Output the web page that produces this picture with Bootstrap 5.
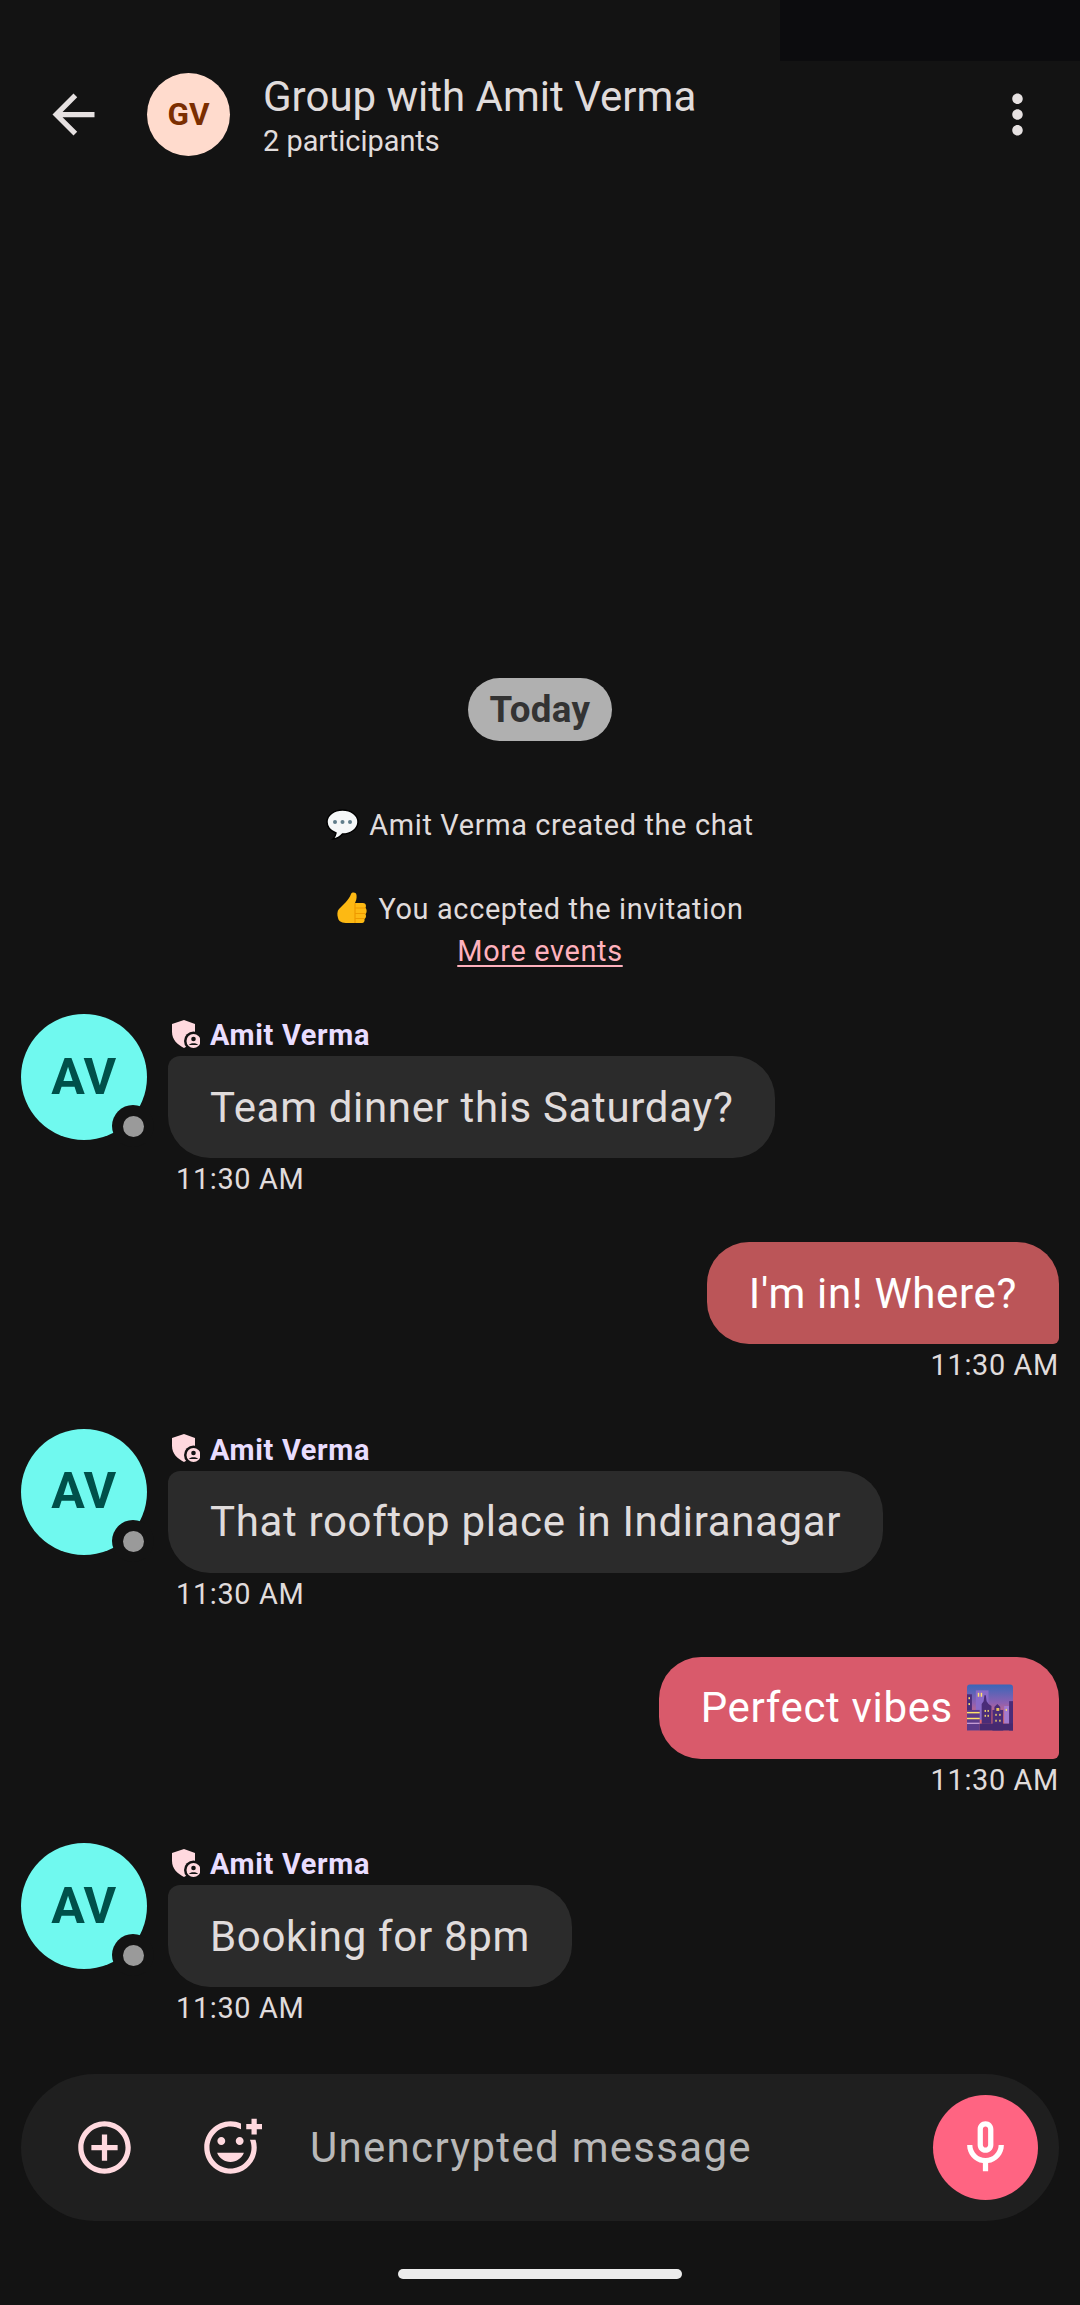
<!DOCTYPE html>
<html lang="en"><head><meta charset="utf-8"><title>Group with Amit Verma</title>
<link href="https://cdn.jsdelivr.net/npm/bootstrap@5.3.0/dist/css/bootstrap.min.css" rel="stylesheet">
<style>
html,body{margin:0;background:#131313}
body{font-family:Roboto,"Liberation Sans",sans-serif;color:#e6e1e1}
.screen{width:1080px;height:2305px;background:#131313;overflow:hidden}
.status-patch{position:absolute;top:0;right:0;width:300px;height:61px;background:#0c0c0e}
.top-head{height:83px;margin-top:73px;padding-left:42px;padding-right:31px}
.ico{width:63px;height:63px;flex:none;fill:currentColor}
.head-av{width:83px;height:83px;background:#ffdbcd;color:#7b2e00;font-size:31.5px;font-weight:700;margin-left:42px;margin-right:33px;flex:none}
.head-title{font-size:42px;line-height:50px;color:#e0dcdc;padding-top:3px}
.head-sub{font-size:28.9px;line-height:38px;color:#e0dcdc}
.feed{padding:0 21px}
.day-pill{width:144px;height:63px;background:#b0b0b0;color:#333;font-size:36.75px;font-weight:700;letter-spacing:.35px}
.event-line{font-size:28.9px;line-height:40px;letter-spacing:.65px;color:#e0dcdc}
.gap-a{margin-top:64px}
.gap-b{margin-top:44px}
.more-link{font-size:28.9px;line-height:40px;letter-spacing:.65px;color:#ffb1bd;text-decoration:underline;text-underline-offset:4px;margin-top:2px}
.emo{display:inline-block;vertical-align:-6px;margin-right:10px}
.av-wrap{width:126px;height:126px;flex:none;margin-right:21px}
.av-face{width:126px;height:126px;background:#70f9ef;color:#00504a;font-size:50px;font-weight:700;letter-spacing:.5px}
.av-dot{position:absolute;left:91px;top:91px;width:42px;height:42px;background:#131313;border-radius:50%}
.av-dot::after{content:"";position:absolute;left:11px;top:11px;width:21px;height:21px;border-radius:50%;background:#9a9a9a}
.who{height:42px;padding-top:2px;font-size:28.9px;font-weight:700;color:#e9ddff;letter-spacing:.66px;margin-left:4px}
.who svg{width:28px;height:28px;margin-right:10px;margin-top:-5px}
.bub{height:102px;font-size:42px;letter-spacing:.66px;padding:0 42px;border-radius:42px;white-space:nowrap}
.bub-in{background:#2b2b2b;color:#e0dcdc;border-top-left-radius:12px}
.bub-out{color:#fff;border-bottom-right-radius:6px}
.tone-a{background:#bb5558}
.tone-b{background:#d95a6b}
.city-emo{margin-left:3px;margin-right:4px}
.stamp{font-size:28.9px;line-height:32px;letter-spacing:.65px;color:#e0dcdc;margin-top:5px}
.stamp-l{padding-left:8px}
.row-first{margin-top:43px}
.row-next{margin-top:47.25px}
.composer{margin:50px 21px 0;height:147px;background:#1f1f1f;border-radius:74px;padding-left:52px;padding-right:21px}
.composer .ico{color:#ffd9df}
.composer .mic-btn .ico{color:#fff}
.ico-gap{margin-left:63px}
.ph{font-size:42px;letter-spacing:1.3px;color:#b8b8b8;margin-left:48px}
.mic-btn{width:105px;height:105px;background:#ff6482;flex:none}
.home-bar{width:284px;height:10px;background:#ececec;border-radius:5px;margin:48px auto 26px}
</style></head><body>
<div class="screen position-relative d-flex flex-column">
<div class="status-patch"></div>
<div class="top-head d-flex align-items-center">
<svg class="ico" viewBox="0 0 24 24"><path d="M20 11H7.83l5.59-5.59L12 4l-8 8 8 8 1.41-1.41L7.83 13H20v-2z"/></svg>
<div class="head-av rounded-circle d-flex align-items-center justify-content-center">GV</div>
<div class="flex-grow-1"><div class="head-title">Group with Amit Verma</div><div class="head-sub">2 participants</div></div>
<svg class="ico" viewBox="0 0 24 24"><path d="M12 8c1.1 0 2-.9 2-2s-.9-2-2-2-2 .9-2 2 .9 2 2 2zm0 2c-1.1 0-2 .9-2 2s.9 2 2 2 2-.9 2-2-.9-2-2-2zm0 6c-1.1 0-2 .9-2 2s.9 2 2 2 2-.9 2-2-.9-2-2-2z"/></svg>
</div>
<div class="feed flex-grow-1 d-flex flex-column justify-content-end">
<div class="text-center d-flex flex-column align-items-center">
<div class="day-pill rounded-pill d-flex align-items-center justify-content-center">Today</div>
<div class="event-line gap-a"><svg class="emo" width="33" height="32" viewBox="0 0 33 32"><path d="M16.5 1C8 1 1 6.3 1 13c0 5 3.8 9 9 11-.3 2.500-1.500 4.500-3 6 4-.4 7.500-2.500 9.500-5 8.500 0 15.500-5.300 15.500-12S25 1 16.500 1z" fill="#f5f7f8" stroke="#000" stroke-width="1.500"/><circle cx="9" cy="13" r="2" fill="#607d8b"/><circle cx="16.500" cy="13" r="2" fill="#607d8b"/><circle cx="24" cy="13" r="2" fill="#607d8b"/></svg>Amit Verma created the chat</div>
<div class="event-line gap-b"><svg class="emo" width="32" height="33" viewBox="0 0 32 33"><path d="M3 17C7 13 13 8 15 2C16 0 20 0 20.500 3C21 6 20 9 19 11L27 11C30 11 30.500 14 29.500 16C31 17 31 21 29.500 22C30.500 24 30 26 28.500 27C29 29 28 31 26 31L13 31C9 31 3 31 2 26C1 23 1 19 3 17z" fill="#fdb913"/><path d="M19 16h10M19 21.500h10M19 26.500h9M19 11v20" stroke="#ef9a00" stroke-width="1.200" fill="none"/></svg>You accepted the invitation</div>
<div class="more-link">More events</div>
</div>
<div class="d-flex row-first">
<div class="av-wrap position-relative"><div class="av-face rounded-circle d-flex align-items-center justify-content-center">AV</div><span class="av-dot"></span></div>
<div><div class="who d-flex align-items-center"><svg viewBox="0 0 28 28"><path d="M12 0L23 4V12C23 19 18 25 12 28C6 25 0 20 0 12V4z" fill="#ffd9df"/><circle cx="21.500" cy="21" r="9.500" fill="#131313"/><circle cx="21.500" cy="21" r="7" fill="#ffd9df"/><circle cx="21.500" cy="19" r="2.300" fill="#131313"/><path d="M17 25c1-2.500 8-2.500 9 0z" fill="#131313"/></svg>Amit Verma</div>
<div class="bub bub-in d-inline-flex align-items-center">Team dinner this Saturday?</div><div class="stamp stamp-l">11:30 AM</div></div>
</div>
<div class="d-flex flex-column align-items-end row-next">
<div class="bub bub-out tone-a d-flex align-items-center">I'm in! Where?</div><div class="stamp">11:30 AM</div></div>
<div class="d-flex row-next">
<div class="av-wrap position-relative"><div class="av-face rounded-circle d-flex align-items-center justify-content-center">AV</div><span class="av-dot"></span></div>
<div><div class="who d-flex align-items-center"><svg viewBox="0 0 28 28"><path d="M12 0L23 4V12C23 19 18 25 12 28C6 25 0 20 0 12V4z" fill="#ffd9df"/><circle cx="21.500" cy="21" r="9.500" fill="#131313"/><circle cx="21.500" cy="21" r="7" fill="#ffd9df"/><circle cx="21.500" cy="19" r="2.300" fill="#131313"/><path d="M17 25c1-2.500 8-2.500 9 0z" fill="#131313"/></svg>Amit Verma</div>
<div class="bub bub-in d-inline-flex align-items-center">That rooftop place in Indiranagar</div><div class="stamp stamp-l">11:30 AM</div></div>
</div>
<div class="d-flex flex-column align-items-end row-next">
<div class="bub bub-out tone-b d-flex align-items-center">Perfect vibes&nbsp;<svg class="city-emo" width="46" height="47" viewBox="0 0 47 47"><defs><linearGradient id="sky" x1="0" y1="0" x2="0" y2="1"><stop offset="0" stop-color="#3a66b8"/><stop offset=".4" stop-color="#8c60b2"/><stop offset=".72" stop-color="#e26a72"/></linearGradient></defs><rect width="47" height="47" rx="3" fill="url(#sky)"/><rect x="9" y="6" width="13" height="30" fill="#8a6ac8"/><rect x="11" y="8.500" width="1.500" height="4" fill="#ffe36a"/><rect x="14" y="8.500" width="1.500" height="4" fill="#ffe36a"/><path d="M15 40V20l2-3 .8-6h1.400l.8 6 2 3 3 2v18z" fill="#4a2c78"/><rect x="0" y="10" width="5" height="18" fill="#4a2c78"/><rect x="1.500" y="13" width="1.500" height="2" fill="#ffe36a"/><rect x="1.500" y="19" width="1.500" height="2" fill="#ffe36a"/><rect x="0" y="26" width="13" height="21" fill="#5c3a8a"/><rect x="0" y="28" width="13" height="1.500" fill="#ffe36a"/><rect x="0" y="34" width="13" height="1.500" fill="#ffe36a"/><rect x="0" y="39" width="13" height="1.300" fill="#c9a0d8"/><rect x="26" y="26" width="11" height="21" fill="#4a2c78"/><path d="M28 26v-3l3-3 3 3v3z" fill="#4a2c78"/><rect x="30" y="24" width="3" height="3" fill="#e8c060"/><rect x="38" y="22" width="5" height="18" fill="#a27ad0"/><rect x="39.500" y="25" width="1.300" height="2" fill="#ffe36a"/><rect x="43" y="17" width="4" height="30" fill="#4a2c78"/><rect x="13" y="40" width="34" height="7" fill="#46296f"/><rect x="18" y="26" width="1.300" height="2" fill="#ffe36a"/><rect x="21" y="26" width="1.300" height="2" fill="#ffe36a"/><rect x="18" y="31" width="1.300" height="2" fill="#ffe36a"/><rect x="21" y="31" width="1.300" height="2" fill="#ffe36a"/><rect x="29" y="30" width="1.300" height="2" fill="#ffe36a"/><rect x="33" y="30" width="1.300" height="2" fill="#ffe36a"/><rect x="29" y="36" width="1.300" height="2" fill="#ffe36a"/><rect x="33" y="36" width="1.300" height="2" fill="#ffe36a"/></svg></div><div class="stamp">11:30 AM</div></div>
<div class="d-flex row-next">
<div class="av-wrap position-relative"><div class="av-face rounded-circle d-flex align-items-center justify-content-center">AV</div><span class="av-dot"></span></div>
<div><div class="who d-flex align-items-center"><svg viewBox="0 0 28 28"><path d="M12 0L23 4V12C23 19 18 25 12 28C6 25 0 20 0 12V4z" fill="#ffd9df"/><circle cx="21.500" cy="21" r="9.500" fill="#131313"/><circle cx="21.500" cy="21" r="7" fill="#ffd9df"/><circle cx="21.500" cy="19" r="2.300" fill="#131313"/><path d="M17 25c1-2.500 8-2.500 9 0z" fill="#131313"/></svg>Amit Verma</div>
<div class="bub bub-in d-inline-flex align-items-center">Booking for 8pm</div><div class="stamp stamp-l">11:30 AM</div></div>
</div>
</div>
<div class="composer d-flex align-items-center">
<svg class="ico" viewBox="0 0 24 24"><path d="M13 7h-2v4H7v2h4v4h2v-4h4v-2h-4V7zm-1-5C6.480 2 2 6.480 2 12s4.480 10 10 10 10-4.480 10-10S17.520 2 12 2zm0 18c-4.410 0-8-3.590-8-8s3.590-8 8-8 8 3.590 8 8-3.590 8-8 8z"/></svg>
<svg class="ico ico-gap" viewBox="0 0 24 24"><path d="M7,9.5C7,8.67,7.67,8,8.5,8S10,8.67,10,9.5c0,0.83-0.67,1.5-1.5,1.5S7,10.33,7,9.5z M12,17.5c2.33,0,4.31-1.46,5.11-3.5 H6.89C7.69,16.04,9.67,17.5,12,17.5z M15.5,11c0.83,0,1.5-0.67,1.5-1.5C17,8.67,16.33,8,15.5,8S14,8.67,14,9.5 C14,10.33,14.67,11,15.5,11z M22,1h-2v2h-2v2h2v2h2V5h2V3h-2V1z M20,12c0,4.42-3.58,8-8,8s-8-3.58-8-8c0-4.42,3.58-8,8-8 c1.46,0,2.82,0.4,4,1.08V2.84C14.77,2.3,13.42,2,11.99,2C6.47,2,2,6.48,2,12c0,5.52,4.47,10,9.99,10C17.52,22,22,17.52,22,12 c0-1.05-0.17-2.05-0.47-3h-2.13C19.78,9.93,20,10.94,20,12z"/></svg>
<div class="ph flex-grow-1">Unencrypted message</div>
<div class="mic-btn rounded-circle d-flex align-items-center justify-content-center"><svg class="ico" viewBox="0 0 24 24"><path d="M12 14c1.660 0 3-1.340 3-3V5c0-1.660-1.340-3-3-3S9 3.340 9 5v6c0 1.660 1.340 3 3 3zm-1-9c0-.55.45-1 1-1s1 .45 1 1v6c0 .55-.45 1-1 1s-1-.45-1-1V5zm6 6c0 2.760-2.240 5-5 5s-5-2.240-5-5H5c0 3.530 2.610 6.430 6 6.920V21h2v-3.080c3.390-.49 6-3.390 6-6.920h-2z"/></svg></div>
</div>
<div class="home-bar"></div>
</div>
<script src="https://cdn.jsdelivr.net/npm/bootstrap@5.3.0/dist/js/bootstrap.bundle.min.js"></script>
</body></html>
